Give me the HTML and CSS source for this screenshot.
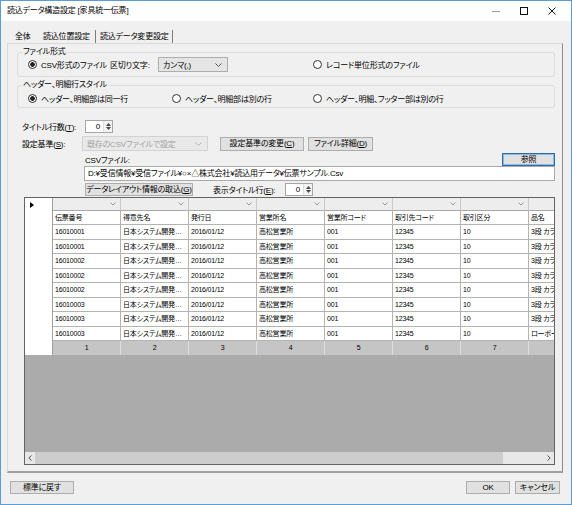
FILE: index.html
```html
<!DOCTYPE html>
<html lang="ja">
<head>
  <meta charset="UTF-8" />
  <title>読込データ構造設定</title>
  <link rel="stylesheet" href="styles.css">
</head>
<body>
  <div class="window">
    <div class="titlebar">
      <span class="title">読込データ構造設定 [家具統一伝票]</span>
      <div class="controls">
        <span class="ctl"><svg width="10" height="10"><line x1="1" y1="5.5" x2="9" y2="5.5" stroke="#9a9a9a" /></svg></span>
        <span class="ctl"><svg width="10" height="10"><rect x="1.5" y="1.5" width="7" height="7" fill="none" stroke="#111" /></svg></span>
        <span class="ctl"><svg width="10" height="10"><path d="M1.5 1.5L8.5 8.5M8.5 1.5L1.5 8.5" stroke="#111" /></svg></span>
      </div>
    </div>

    <div class="client">
      <div class="tabs">
        <span class="tab t1">全体</span>
        <span class="tab t2">読込位置設定</span>
        <span class="tab t3 active">読込データ変更設定</span>
      </div>

      <div class="panel">
        <!-- ファイル形式 -->
        <fieldset class="group g1">
          <legend>ファイル形式</legend>
          <div class="opt-row">
            <span class="radio w-csv"><span class="dot on"></span>CSV形式のファイル</span>
            <span class="sep-label">区切り文字:</span>
            <div class="combo w-sep">カンマ(,)
              <svg width="7" height="4"><polyline points="0.5,0.5 3.5,3.5 6.5,0.5" fill="none" stroke="#555" /></svg>
            </div>
            <span class="radio record"><span class="dot"></span>レコード単位形式のファイル</span>
          </div>
        </fieldset>

        <!-- ヘッダー、明細行スタイル -->
        <fieldset class="group g2">
          <legend>ヘッダー、明細行スタイル</legend>
          <div class="opt-grid">
            <span class="radio"><span class="dot on"></span>ヘッダー、明細部は同一行</span>
            <span class="radio"><span class="dot"></span>ヘッダー、明細部は別の行</span>
            <span class="radio"><span class="dot"></span>ヘッダー、明細、フッター部は別の行</span>
          </div>
        </fieldset>

        <div class="line title-row">
          <span class="lbl w-title">タイトル行数(<u>T</u>):</span>
          <div class="spin">
            <span class="val">0</span>
            <span class="arrows">
              <svg width="5" height="3"><polygon points="0,3 2.5,0 5,3" fill="#444" /></svg>
              <svg width="5" height="3"><polygon points="0,0 2.5,3 5,0" fill="#444" /></svg>
            </span>
          </div>
        </div>

        <div class="line base-row">
          <span class="lbl w-base">設定基準(<u>S</u>):</span>
          <div class="combo disabled w-base-combo">既存のCSVファイルで設定
            <svg width="7" height="4"><polyline points="0.5,0.5 3.5,3.5 6.5,0.5" fill="none" stroke="#b5b5b5" /></svg>
          </div>
          <button class="btn w-change">設定基準の変更(<u>C</u>)</button>
          <button class="btn w-detail">ファイル詳細(<u>D</u>)</button>
        </div>

        <div class="line csv-row">
          <span class="lbl">CSVファイル:</span>
          <button class="btn focus w-ref">参照</button>
        </div>
        <div class="textbox">D:¥受信情報¥受信ファイル¥○×△株式会社¥読込用データ¥伝票サンプル.Csv</div>

        <div class="line layout-row">
          <button class="btn w-layout">データレイアウト情報の取込(<u>G</u>)</button>
          <span class="lbl w-show">表示タイトル行(<u>E</u>):</span>
          <div class="spin">
            <span class="val">0</span>
            <span class="arrows">
              <svg width="5" height="3"><polygon points="0,3 2.5,0 5,3" fill="#444" /></svg>
              <svg width="5" height="3"><polygon points="0,0 2.5,3 5,0" fill="#444" /></svg>
            </span>
          </div>
        </div>

        <!-- データグリッド -->
        <div class="grid">
          <div class="row filter">
            <div class="rh"><svg width="4" height="6"><polygon points="0,0 4,3 0,6" fill="#000" /></svg></div>
            <div class="f"><svg width="6" height="4"><polyline points="0.5,0.5 3,3 5.5,0.5" fill="none" stroke="#9a9a9a" /></svg></div>
            <div class="f"><svg width="6" height="4"><polyline points="0.5,0.5 3,3 5.5,0.5" fill="none" stroke="#9a9a9a" /></svg></div>
            <div class="f"><svg width="6" height="4"><polyline points="0.5,0.5 3,3 5.5,0.5" fill="none" stroke="#9a9a9a" /></svg></div>
            <div class="f"><svg width="6" height="4"><polyline points="0.5,0.5 3,3 5.5,0.5" fill="none" stroke="#9a9a9a" /></svg></div>
            <div class="f"><svg width="6" height="4"><polyline points="0.5,0.5 3,3 5.5,0.5" fill="none" stroke="#9a9a9a" /></svg></div>
            <div class="f"><svg width="6" height="4"><polyline points="0.5,0.5 3,3 5.5,0.5" fill="none" stroke="#9a9a9a" /></svg></div>
            <div class="f"><svg width="6" height="4"><polyline points="0.5,0.5 3,3 5.5,0.5" fill="none" stroke="#9a9a9a" /></svg></div>
            <div class="f"><svg width="6" height="4"><polyline points="0.5,0.5 3,3 5.5,0.5" fill="none" stroke="#9a9a9a" /></svg></div>
          </div>
          <div class="row head">
            <div class="rh"></div>
            <div class="c">伝票番号</div><div class="c">得意先名</div><div class="c">発行日</div><div class="c">営業所名</div>
            <div class="c">営業所コード</div><div class="c">取引先コード</div><div class="c">取引区分</div><div class="c">品名</div>
          </div>
          <div class="row">
            <div class="rh"></div>
            <div class="c">16010001</div><div class="c">日本システム開発…</div><div class="c">2016/01/12</div><div class="c">高松営業所</div>
            <div class="c">001</div><div class="c">12345</div><div class="c">10</div><div class="c">3段 カラーボックス</div>
          </div>
          <div class="row">
            <div class="rh"></div>
            <div class="c">16010001</div><div class="c">日本システム開発…</div><div class="c">2016/01/12</div><div class="c">高松営業所</div>
            <div class="c">001</div><div class="c">12345</div><div class="c">10</div><div class="c">3段 カラーボックス</div>
          </div>
          <div class="row">
            <div class="rh"></div>
            <div class="c">16010002</div><div class="c">日本システム開発…</div><div class="c">2016/01/12</div><div class="c">高松営業所</div>
            <div class="c">001</div><div class="c">12345</div><div class="c">10</div><div class="c">3段 カラーボックス</div>
          </div>
          <div class="row">
            <div class="rh"></div>
            <div class="c">16010002</div><div class="c">日本システム開発…</div><div class="c">2016/01/12</div><div class="c">高松営業所</div>
            <div class="c">001</div><div class="c">12345</div><div class="c">10</div><div class="c">3段 カラーボックス</div>
          </div>
          <div class="row">
            <div class="rh"></div>
            <div class="c">16010002</div><div class="c">日本システム開発…</div><div class="c">2016/01/12</div><div class="c">高松営業所</div>
            <div class="c">001</div><div class="c">12345</div><div class="c">10</div><div class="c">3段 カラーボックス</div>
          </div>
          <div class="row">
            <div class="rh"></div>
            <div class="c">16010003</div><div class="c">日本システム開発…</div><div class="c">2016/01/12</div><div class="c">高松営業所</div>
            <div class="c">001</div><div class="c">12345</div><div class="c">10</div><div class="c">3段 カラーボックス</div>
          </div>
          <div class="row">
            <div class="rh"></div>
            <div class="c">16010003</div><div class="c">日本システム開発…</div><div class="c">2016/01/12</div><div class="c">高松営業所</div>
            <div class="c">001</div><div class="c">12345</div><div class="c">10</div><div class="c">3段 カラーボックス</div>
          </div>
          <div class="row">
            <div class="rh"></div>
            <div class="c">16010003</div><div class="c">日本システム開発…</div><div class="c">2016/01/12</div><div class="c">高松営業所</div>
            <div class="c">001</div><div class="c">12345</div><div class="c">10</div><div class="c">ローボード</div>
          </div>
          <div class="row nums">
            <div class="rh"></div>
            <div class="c">1</div><div class="c">2</div><div class="c">3</div><div class="c">4</div>
            <div class="c">5</div><div class="c">6</div><div class="c">7</div><div class="c">8</div>
          </div>
          <div class="empty"></div>
          <div class="hscroll">
            <span class="arrow"><svg width="4" height="6"><polyline points="3.5,0.5 0.8,3 3.5,5.5" fill="none" stroke="#555" /></svg></span>
            <span class="thumb"></span>
            <span class="track"></span>
            <span class="arrow"><svg width="4" height="6"><polyline points="0.5,0.5 3.2,3 0.5,5.5" fill="none" stroke="#555" /></svg></span>
          </div>
        </div>
      </div>

      <div class="footer">
        <button class="btn w-reset">標準に戻す</button>
        <button class="btn w-ok">OK</button>
        <button class="btn w-cancel">キャンセル</button>
      </div>
    </div>
  </div>
</body>
</html>
```

FILE: styles.css
```css
* {
  box-sizing: border-box;
}
body {
  margin: 0;
  font-family: "Liberation Sans", "Noto Sans CJK JP", sans-serif;
  font-size: 8px;
  font-feature-settings: "palt";
  letter-spacing: -0.2px;
  color: #000;
  background: #fff;
}
u {
  text-decoration: underline;
}
.window {
  width: 572px;
  height: 505px;
  border: 1px solid #5b9bd8;
  background: #f0f0f0;
  display: flex;
  flex-direction: column;
}

/* title bar */
.titlebar {
  height: 20px;
  background: #fff;
  display: flex;
  align-items: center;
  padding-left: 6px;
}
.title {
  line-height: 10px;
}
.controls {
  margin-left: auto;
  margin-right: 5px;
  display: flex;
}
.ctl {
  width: 28px;
  height: 20px;
  display: flex;
  align-items: center;
  justify-content: center;
}

.client {
  flex: 1;
  display: flex;
  flex-direction: column;
}

/* tabs */
.tabs {
  height: 22px;
  display: flex;
  align-items: flex-end;
  padding-left: 10px;
}
.tab {
  height: 13px;
  line-height: 13px;
  padding: 0 4px;
  white-space: nowrap;
}
.t1 { width: 24px; }
.t2 { width: 56px; margin-left: 4px; }
.t3 { width: 78px; }
.tab.active {
  border-left: 1px solid #7d7d7d;
  border-right: 1px solid #7d7d7d;
}

.panel {
  height: 430px;
  margin: 0 8px 0 6px;
  border-top: 1px solid #dadada;
  border-left: 1px solid #dadada;
  border-right: 1px solid #8e8e8e;
  border-bottom: 2px solid #a0a0a0;
  display: flex;
  flex-direction: column;
}

/* group boxes */
.group {
  margin: 3px 7px 0 9px;
  padding: 0 0 4px 4px;
  border: 1px solid #dcdcdc;
  border-radius: 3px;
  min-width: 0;
}
.group legend {
  padding: 0 1px;
  line-height: 10px;
}
.g2 {
  padding-top: 1px;
  padding-bottom: 2px;
}
.opt-row {
  height: 15px;
  display: flex;
  align-items: center;
  padding-left: 6px;
}
.opt-row > * {
  flex: none;
}
.opt-grid {
  height: 14px;
  display: grid;
  grid-template-columns: 144px 141px auto;
  align-items: center;
  padding-left: 6px;
}
.radio {
  display: flex;
  align-items: center;
  gap: 4px;
  white-space: nowrap;
}
.dot {
  width: 9px;
  height: 9px;
  flex: none;
  border: 1px solid #333;
  border-radius: 50%;
  background: #fff;
}
.dot.on {
  background: radial-gradient(circle, #222 0 2px, #fff 2.6px);
}
.w-csv { width: 82px; }
.sep-label { width: 48px; white-space: nowrap; }
.record { margin-left: 85px; }

.combo {
  height: 15px;
  display: flex;
  align-items: center;
  justify-content: space-between;
  padding: 0 5px 0 4px;
  background: #e5e5e5;
  border: 1px solid #adadad;
  white-space: nowrap;
}
.combo.disabled {
  background: #e9e9e9;
  border-color: #d3d3d3;
  color: #a2a2a2;
}
.w-sep { width: 70px; }
.w-base-combo { width: 126px; }

/* form lines */
.line {
  display: flex;
  align-items: center;
  margin-left: 14px;
}
.line > * {
  flex: none;
}
.lbl {
  white-space: nowrap;
}
.title-row { height: 14px; margin-top: 11px; }
.base-row { height: 15px; margin-top: 3px; }
.csv-row { height: 13px; margin-top: 2px; margin-left: 77px; margin-right: 7px; }
.layout-row { height: 13px; margin-top: 2px; margin-left: 77px; }
.w-title { width: 63px; }
.w-base { width: 60px; }
.w-show { width: 72px; margin-left: 20px; }

.spin {
  width: 28px;
  height: 13px;
  display: flex;
  background: #fff;
  border: 1px solid #a6a6a6;
}
.spin .val {
  flex: 1;
  text-align: right;
  padding-right: 3px;
  line-height: 11px;
}
.spin .arrows {
  width: 9px;
  display: flex;
  flex-direction: column;
  align-items: center;
  justify-content: center;
  gap: 1px;
  background: #f3f3f3;
  border-left: 1px solid #dedede;
}

.btn {
  font: inherit;
  font-feature-settings: "palt";
  letter-spacing: -0.2px;
  height: 14px;
  padding: 0;
  background: #e1e1e1;
  border: 1px solid #adadad;
  color: #000;
  line-height: 12px;
  white-space: nowrap;
}
.btn.focus {
  border-color: #2b6cab;
  box-shadow: inset 0 0 0 1px #8db8e0;
}
.w-change { width: 84px; margin-left: 12px; }
.w-detail { width: 65px; margin-left: 4px; }
.w-ref { width: 53px; height: 13px; margin-left: auto; }
.w-layout { width: 108px; height: 13px; }

.textbox {
  height: 15px;
  margin: 0 7px 0 76px;
  padding-left: 3px;
  line-height: 13px;
  background: #fff;
  border: 1px solid #a9a9a9;
  white-space: nowrap;
}

/* grid */
.grid {
  height: 268px;
  margin: 1px 7px 0 16px;
  border: 1px solid #646464;
  display: flex;
  flex-direction: column;
  overflow: hidden;
  font-size: 7px;
  background: #fff;
}
.row {
  display: grid;
  grid-template-columns: 28px repeat(8, 68px);
  height: 14.5px;
  flex: none;
}
.row.filter { height: 13px; }
.row.head { height: 14px; }
.row.nums { height: 14px; }
.rh {
  border-right: 1px solid #a0a0a0;
  background: #fff;
  display: flex;
  align-items: center;
  padding-left: 5px;
}
.f {
  background: #ededed;
  border-right: 1px solid #c9c9c9;
  border-bottom: 1px solid #a9a9a9;
  display: flex;
  align-items: center;
  justify-content: flex-end;
  padding-right: 4px;
}
.c {
  border-right: 1px solid #b3b3b3;
  border-bottom: 1px solid #b3b3b3;
  padding: 0 2px;
  line-height: 13.5px;
  white-space: nowrap;
  overflow: hidden;
  text-overflow: ellipsis;
}
.head .c {
  line-height: 13px;
}
.nums .c {
  background: #c5c5c5;
  border-right-color: #dedede;
  border-bottom: none;
  text-align: center;
  line-height: 14px;
}
.empty {
  flex: 1;
  background: #ababab;
}
.hscroll {
  height: 12px;
  display: flex;
  background: #e8e8e8;
  flex: none;
}
.hscroll .arrow {
  width: 10px;
  display: flex;
  align-items: center;
  justify-content: center;
}
.hscroll .thumb {
  width: 468px;
  background: #cdcdcd;
}
.hscroll .track {
  flex: 1;
}

/* footer buttons */
.footer {
  display: flex;
  padding: 8px 11px 0 9px;
}
.w-reset { width: 64px; height: 13px; }
.w-ok { width: 44px; height: 13px; margin-left: auto; }
.w-cancel { width: 45px; height: 13px; margin-left: 5px; }
```
